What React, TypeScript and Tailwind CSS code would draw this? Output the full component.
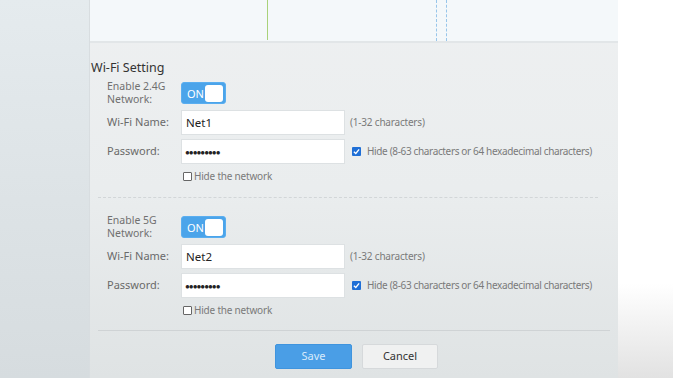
import React from "react";

const font = { fontFamily: '"Noto Sans", "Open Sans", Arial, sans-serif' };

const Toggle = () => (
  <div className="w-[45px] h-[22px] rounded-[3px] bg-[#4ba4ea] border border-[#5aaef0] flex items-center justify-between pl-[5px] pr-[2px]">
    <span className="text-[11px] text-white leading-none">ON</span>
    <span className="w-[18px] h-[17px] rounded-[3px] bg-white" />
  </div>
);

const Checkbox = ({ checked }: { checked?: boolean }) =>
  checked ? (
    <span className="w-[9px] h-[9px] rounded-[1px] bg-[#1f6fd6] flex items-center justify-center">
      <svg width="7" height="7" viewBox="0 0 8 8">
        <path d="M1 4.2 L3.2 6.3 L7 1.5" stroke="white" strokeWidth="1.5" fill="none" />
      </svg>
    </span>
  ) : (
    <span className="w-[9px] h-[9px] rounded-[1px] border border-[#666] bg-white" />
  );

const NetworkBlock = ({ band, name }: { band: string; name: string }) => (
  <div className="grid grid-cols-[74px_164px_1fr] gap-y-[4px] pl-[17px] items-center">
    <div className="text-[10.5px] text-[#707070] flex flex-col">
      <span className="leading-[13px]">Enable {band}</span>
      <span className="leading-[13px]">Network:</span>
    </div>
    <div className="h-[22px] flex items-center">
      <Toggle />
    </div>
    <div />

    <div className="text-[11px] text-[#6a6a6a]">Wi-Fi Name:</div>
    <div className="h-[25px] bg-white border border-[#dde1e3] flex items-center px-[4px] text-[11.5px] text-[#222]">
      {name}
    </div>
    <div className="pl-[5px] text-[10px] tracking-[-0.2px] text-[#7a7a7a]">(1-32 characters)</div>

    <div className="text-[11px] text-[#6a6a6a]">Password:</div>
    <div className="h-[25px] bg-white border border-[#dde1e3] flex items-center px-[3px] text-[8px] tracking-[-1px] text-[#222]">
      ●●●●●●●●●
    </div>
    <div className="pl-[7px] flex items-center gap-[6px] text-[10px] tracking-[-0.35px] text-[#7a7a7a]">
      <Checkbox checked />
      <span>Hide (8-63 characters or 64 hexadecimal characters)</span>
    </div>

    <div />
    <div className="flex items-center gap-[2px] pl-[2px] mt-[1px] text-[10px] tracking-[-0.2px] text-[#7a7a7a]">
      <Checkbox />
      <span>Hide the network</span>
    </div>
    <div />
  </div>
);

export default function App() {
  return (
    <div style={font} className="w-[673px] h-[378px] flex overflow-hidden bg-white">
      {/* LEFT STRIP */}
      <div className="w-[90px] bg-gradient-to-b from-[#e5ebee] to-[#d6dcdf] border-r border-[#d8dde0]" />

      {/* MAIN PANEL */}
      <div className="w-[528px] flex flex-col bg-gradient-to-b from-[#eef0f1] via-[#eaedee] to-[#dfe3e4]">
        {/* CHART FRAGMENT */}
        <div className="relative h-[43px] shrink-0 bg-[#f4f8fa] border-b-2 border-[#e2e6e8]">
          <div className="absolute left-[177px] top-0 h-[40px] w-[1px] bg-[#a9d27a]" />
          <div className="absolute left-[346px] top-0 h-[41px] border-l border-dashed border-[#98c6ea]" />
          <div className="absolute left-[356px] top-0 h-[41px] border-l border-dashed border-[#98c6ea]" />
        </div>

        <div className="pl-[1px] pt-[15px] text-[12.5px] leading-[19px] text-[#333]">Wi-Fi Setting</div>

        <div className="mt-[3px]">
          <NetworkBlock band="2.4G" name="Net1" />
        </div>

        <div className="ml-[8px] mr-[20px] mt-[13px] border-t border-dashed border-[#d2d6d8]" />

        <div className="mt-[16px]">
          <NetworkBlock band="5G" name="Net2" />
        </div>

        <div className="mx-[8px] mt-[12px] border-t border-[#cfd3d5]" />

        <div className="flex justify-center gap-[10px] mt-[13px] pl-[5px]">
          <button className="w-[77px] h-[25px] rounded-[2px] bg-[#4a9ee6] border border-[#3f94de] text-[11px] text-[#d8ebfb]">
            Save
          </button>
          <button className="w-[76px] h-[25px] rounded-[2px] bg-[#f0f1f1] border border-[#d6d9db] text-[11px] text-[#333]">
            Cancel
          </button>
        </div>
      </div>

      {/* RIGHT SIDE */}
      <div className="flex-1 bg-gradient-to-b from-white via-white via-75% to-[#e2e2e2]" />
    </div>
  );
}
